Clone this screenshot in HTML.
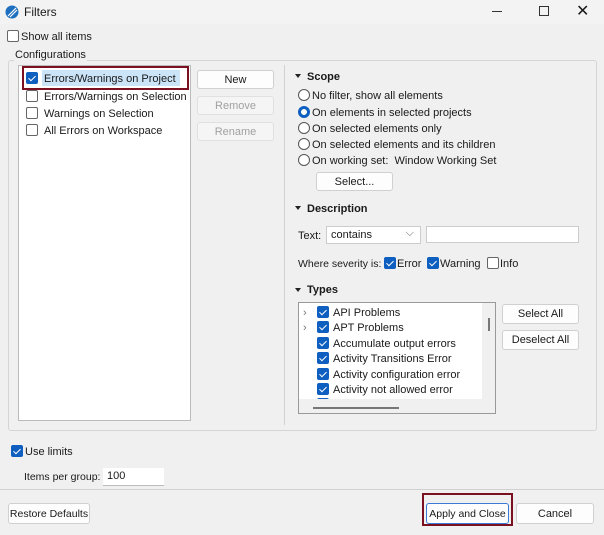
<!DOCTYPE html><html><head><style>
*{box-sizing:border-box}
body{margin:0;width:604px;height:535px;background:#f0f0f0;font-family:"Liberation Sans",sans-serif;font-size:11px;color:#1a1a1a;position:relative;overflow:hidden}
.a{position:absolute;white-space:nowrap}
.t{position:absolute;white-space:nowrap;margin-top:1px;line-height:14px}
.cb{position:absolute;width:12px;height:12px;border:1px solid #666;border-radius:2px;background:#fff}
.cb.on{background:#0f5fc0;border-color:#0f5fc0}
.cb.on:after{content:"";position:absolute;left:3px;top:1px;width:3px;height:6px;border:solid #fff;border-width:0 1.3px 1.3px 0;transform:rotate(45deg)}
.btn{position:absolute;white-space:nowrap;background:#fdfdfd;border:1px solid #d0d0d0;border-radius:3px;text-align:center;line-height:18px}
.dis{color:#a0a0a0;background:#f5f5f5;border-color:#e0e0e0}
.rd{position:absolute;width:12px;height:12px;border:1px solid #555;border-radius:50%;background:#fff}
.rd.on{border:3.5px solid #0f5fc0}
.tri{position:absolute;width:0;height:0;border-left:3.5px solid transparent;border-right:3.5px solid transparent;border-top:4px solid #222}
b{font-weight:bold}
</style></head><body>
<div class="a" style="left:0;top:0;width:604px;height:24px;background:#f3f3f3"></div>
<svg class="a" style="left:5px;top:5px" width="14" height="14"><circle cx="7" cy="7" r="6.5" fill="#1d6fc0"/><path d="M3 11 L11 3 M5 12 L12 5" stroke="#fff" stroke-width="1.2"/></svg>
<div class="t" style="left:24px;top:4px;font-size:12px">Filters</div>
<div class="a" style="left:492px;top:11px;width:10px;height:1px;background:#333"></div>
<div class="a" style="left:539px;top:6px;width:10px;height:10px;border:1px solid #333"></div>
<div class="a" style="left:576px;top:1px;font-size:16px">✕</div>
<div class="cb" style="left:7px;top:30px"></div><div class="t" style="left:21px;top:29px">Show all items</div>
<div class="a" style="left:8px;top:60px;width:589px;height:371px;border:1px solid #d5d5d5;border-radius:3px"></div>
<div class="t" style="left:14px;top:47px;background:#f0f0f0;padding:0 1px">Configurations</div>
<div class="a" style="left:284px;top:65px;width:1px;height:360px;background:#d0d0d0"></div>
<div class="a" style="left:18px;top:65px;width:173px;height:356px;background:#fff;border:1px solid #bbb"></div>
<div class="a" style="left:42px;top:70px;width:138px;height:16px;background:#cce4f7"></div>
<div class="a" style="left:22px;top:66px;width:167px;height:24px;border:2px solid #7b1020"></div>
<div class="cb on" style="left:26px;top:72px"></div><div class="t" style="left:44px;top:71px">Errors/Warnings on Project</div>
<div class="cb" style="left:26px;top:90px"></div><div class="t" style="left:44px;top:89px">Errors/Warnings on Selection</div>
<div class="cb" style="left:26px;top:107px"></div><div class="t" style="left:44px;top:106px">Warnings on Selection</div>
<div class="cb" style="left:26px;top:124px"></div><div class="t" style="left:44px;top:123px">All Errors on Workspace</div>
<div class="btn" style="left:197px;top:70px;width:77px;height:19px">New</div>
<div class="btn dis" style="left:197px;top:96px;width:77px;height:19px">Remove</div>
<div class="btn dis" style="left:197px;top:122px;width:77px;height:19px">Rename</div>
<div class="tri" style="left:295px;top:74px"></div><div class="t" style="left:307px;top:69px"><b>Scope</b></div>
<div class="rd" style="left:298px;top:89px"></div><div class="t" style="left:312px;top:88px">No filter, show all elements</div>
<div class="rd on" style="left:298px;top:106px"></div><div class="t" style="left:312px;top:105px">On elements in selected projects</div>
<div class="rd" style="left:298px;top:122px"></div><div class="t" style="left:312px;top:121px">On selected elements only</div>
<div class="rd" style="left:298px;top:138px"></div><div class="t" style="left:312px;top:137px">On selected elements and its children</div>
<div class="rd" style="left:298px;top:154px"></div><div class="t" style="left:312px;top:153px">On working set:&nbsp; Window Working Set</div>
<div class="btn" style="left:316px;top:172px;width:77px;height:19px">Select...</div>
<div class="tri" style="left:295px;top:206px"></div><div class="t" style="left:307px;top:201px"><b>Description</b></div>
<div class="t" style="left:298px;top:228px">Text:</div>
<div class="a" style="left:326px;top:226px;width:95px;height:18px;background:#fff;border:1px solid #ccc;padding:2px 4px">contains<span style="position:absolute;right:6px;top:0;color:#666">⌵</span></div>
<div class="a" style="left:426px;top:226px;width:153px;height:17px;background:#fff;border:1px solid #ccc"></div>
<div class="t" style="left:298px;top:256px;font-size:10.5px">Where severity is:</div>
<div class="cb on" style="left:384px;top:257px"></div><div class="t" style="left:397px;top:256px">Error</div>
<div class="cb on" style="left:427px;top:257px"></div><div class="t" style="left:440px;top:256px">Warning</div>
<div class="cb" style="left:487px;top:257px"></div><div class="t" style="left:500px;top:256px">Info</div>
<div class="tri" style="left:295px;top:288px"></div><div class="t" style="left:307px;top:282px"><b>Types</b></div>
<div class="a" style="left:298px;top:302px;width:198px;height:112px;border:1px solid #999;background:#f0f0f0"></div>
<div class="a" style="left:299px;top:303px;width:183px;height:96px;background:#fff;overflow:hidden">
<div class="t" style="left:4px;top:2px;color:#777">›</div><div class="cb on" style="left:18px;top:3px"></div><div class="t" style="left:34px;top:2px">API Problems</div>
<div class="t" style="left:4px;top:17px;color:#777">›</div><div class="cb on" style="left:18px;top:18px"></div><div class="t" style="left:34px;top:17px">APT Problems</div>
<div class="cb on" style="left:18px;top:34px"></div><div class="t" style="left:34px;top:33px">Accumulate output errors</div>
<div class="cb on" style="left:18px;top:49px"></div><div class="t" style="left:34px;top:48px">Activity Transitions Error</div>
<div class="cb on" style="left:18px;top:65px"></div><div class="t" style="left:34px;top:64px">Activity configuration error</div>
<div class="cb on" style="left:18px;top:80px"></div><div class="t" style="left:34px;top:79px">Activity not allowed error</div>
<div class="cb on" style="left:18px;top:95px"></div>
</div>
<div class="a" style="left:488px;top:318px;width:2px;height:13px;background:#777"></div>
<div class="a" style="left:313px;top:407px;width:86px;height:2px;background:#777"></div>
<div class="btn" style="left:502px;top:304px;width:77px;height:20px;line-height:19px">Select All</div>
<div class="btn" style="left:502px;top:330px;width:77px;height:20px;line-height:19px">Deselect All</div>
<div class="cb on" style="left:11px;top:445px"></div><div class="t" style="left:25px;top:444px">Use limits</div>
<div class="t" style="left:24px;top:469px;font-size:10.5px">Items per group:</div>
<div class="a" style="left:103px;top:468px;width:61px;height:18px;background:#fff;border-bottom:1px solid #bbb;padding:2px 4px">100</div>
<div class="a" style="left:0;top:489px;width:604px;height:1px;background:#d0d0d0"></div>
<div class="btn" style="left:8px;top:503px;width:82px;height:21px;line-height:20px;font-size:10.5px">Restore Defaults</div>
<div class="a" style="left:422px;top:493px;width:91px;height:33px;border:2px solid #7b1020"></div>
<div class="btn" style="left:426px;top:503px;width:83px;height:21px;line-height:20px;border-color:#3a7bd5;font-size:10.5px">Apply and Close</div>
<div class="btn" style="left:516px;top:503px;width:78px;height:21px;line-height:20px">Cancel</div>
</body></html>
